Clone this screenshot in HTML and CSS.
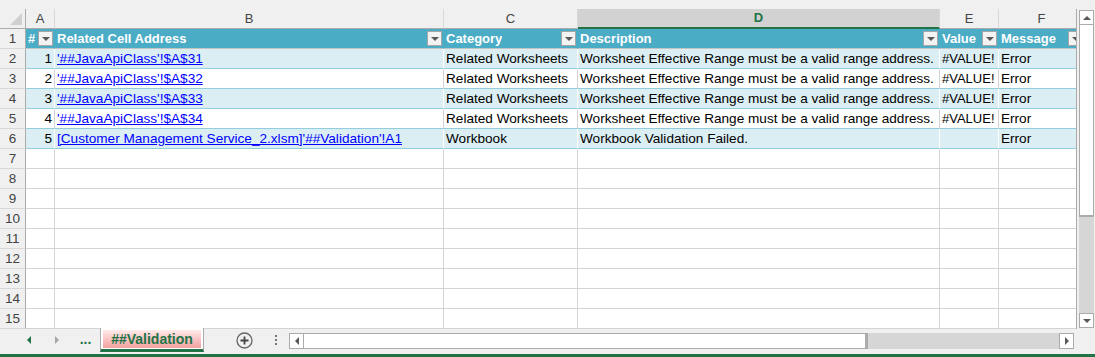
FILE: index.html
```html
<!DOCTYPE html>
<html lang="en">
  <head>
    <meta charset="UTF-8" />
    <title>##Validation</title>
    <link rel="stylesheet" href="styles.css">
  </head>
  <body>
    <div class="top"></div>

    <div class="sheet">
      <div class="grid">
        <table>
          <colgroup>
            <col style="width:26px"><col style="width:29px"><col style="width:389px"><col style="width:134px">
            <col style="width:362px"><col style="width:59px"><col style="width:86px">
          </colgroup>
          <tr class="colhdr">
            <td class="corner">
              <svg width="25" height="19" viewBox="0 0 25 19"><polygon points="22,4 22,16 10,16" fill="#d0d0d0" /></svg>
            </td>
            <td>A</td>
            <td>B</td>
            <td>C</td>
            <td class="sel">D</td>
            <td>E</td>
            <td>F</td>
          </tr>
          <tr class="th">
            <td class="rh">1</td>
            <td><div class="hc"><span>#</span><i class="fb"></i></div></td>
            <td><div class="hc"><span>Related Cell Address</span><i class="fb"></i></div></td>
            <td><div class="hc"><span>Category</span><i class="fb"></i></div></td>
            <td><div class="hc"><span>Description</span><i class="fb"></i></div></td>
            <td><div class="hc"><span>Value</span><i class="fb"></i></div></td>
            <td><div class="hc"><span>Message</span><i class="fb"></i></div></td>
          </tr>
          <tr class="band">
            <td class="rh">2</td>
            <td class="num">1</td>
            <td><a href="#">'##JavaApiClass'!$A$31</a></td>
            <td>Related Worksheets</td>
            <td>Worksheet Effective Range must be a valid range address.</td>
            <td class="val">#VALUE!</td>
            <td>Error</td>
          </tr>
          <tr class="plain">
            <td class="rh">3</td>
            <td class="num">2</td>
            <td><a href="#">'##JavaApiClass'!$A$32</a></td>
            <td>Related Worksheets</td>
            <td>Worksheet Effective Range must be a valid range address.</td>
            <td class="val">#VALUE!</td>
            <td>Error</td>
          </tr>
          <tr class="band">
            <td class="rh">4</td>
            <td class="num">3</td>
            <td><a href="#">'##JavaApiClass'!$A$33</a></td>
            <td>Related Worksheets</td>
            <td>Worksheet Effective Range must be a valid range address.</td>
            <td class="val">#VALUE!</td>
            <td>Error</td>
          </tr>
          <tr class="plain">
            <td class="rh">5</td>
            <td class="num">4</td>
            <td><a href="#">'##JavaApiClass'!$A$34</a></td>
            <td>Related Worksheets</td>
            <td>Worksheet Effective Range must be a valid range address.</td>
            <td class="val">#VALUE!</td>
            <td>Error</td>
          </tr>
          <tr class="band">
            <td class="rh">6</td>
            <td class="num">5</td>
            <td><a href="#">[Customer Management Service_2.xlsm]'##Validation'!A1</a></td>
            <td>Workbook</td>
            <td>Workbook Validation Failed.</td>
            <td></td>
            <td>Error</td>
          </tr>
          <tr><td class="rh">7</td><td></td><td></td><td></td><td></td><td></td><td></td></tr>
          <tr><td class="rh">8</td><td></td><td></td><td></td><td></td><td></td><td></td></tr>
          <tr><td class="rh">9</td><td></td><td></td><td></td><td></td><td></td><td></td></tr>
          <tr><td class="rh">10</td><td></td><td></td><td></td><td></td><td></td><td></td></tr>
          <tr><td class="rh">11</td><td></td><td></td><td></td><td></td><td></td><td></td></tr>
          <tr><td class="rh">12</td><td></td><td></td><td></td><td></td><td></td><td></td></tr>
          <tr><td class="rh">13</td><td></td><td></td><td></td><td></td><td></td><td></td></tr>
          <tr><td class="rh">14</td><td></td><td></td><td></td><td></td><td></td><td></td></tr>
          <tr><td class="rh">15</td><td></td><td></td><td></td><td></td><td></td><td></td></tr>
        </table>
      </div>

      <div class="vscroll">
        <div class="sb-btn"><i class="tri-up"></i></div>
        <div class="vthumb"></div>
        <div class="vtrack"></div>
        <div class="sb-btn"><i class="tri-down"></i></div>
      </div>
    </div>

    <div class="tabbar">
      <div class="nav"><i class="tri-left green"></i></div>
      <div class="nav"><i class="tri-right grey"></i></div>
      <div class="more-tabs">...</div>
      <div class="tab"><div class="tab-face">##Validation</div></div>
      <div class="add">
        <svg width="17" height="17" viewBox="0 0 17 17">
          <circle cx="8.5" cy="8.5" r="7.5" fill="none" stroke="#666" stroke-width="1.3" />
          <path d="M8.5 4.5v8M4.5 8.5h8" stroke="#444" stroke-width="1.8" />
        </svg>
      </div>
      <div class="kebab">
        <svg width="4" height="12" viewBox="0 0 4 12">
          <rect x="1" y="1" width="2" height="2" fill="#777" />
          <rect x="1" y="5" width="2" height="2" fill="#777" />
          <rect x="1" y="9" width="2" height="2" fill="#777" />
        </svg>
      </div>
      <div class="hscroll">
        <div class="sb-btn h"><i class="tri-left dark"></i></div>
        <div class="hthumb"></div>
        <div class="htrack"></div>
        <div class="sb-btn h"><i class="tri-right dark"></i></div>
      </div>
    </div>

    <div class="status"></div>
  </body>
</html>
```

FILE: styles.css
```css
body {
  margin: 0;
  background: #f0f0f0;
  font-family: "Liberation Sans", Arial, sans-serif;
  font-size: 13px;
  color: #000;
  overflow: hidden;
}
.top {
  height: 9px;
}
.sheet {
  display: flex;
  height: 320px;
}
.grid {
  width: 1076px;
  overflow: hidden;
  border-right: 1px solid #ababab;
  background: #fff;
}
table {
  border-collapse: separate;
  border-spacing: 0;
  table-layout: fixed;
  width: 1085px;
}
td {
  height: 20px;
  box-sizing: border-box;
  padding: 0 2px;
  line-height: 19px;
  font-size: 13.6px;
  border-right: 1px solid #d4d4d4;
  border-bottom: 1px solid #d4d4d4;
  white-space: nowrap;
  overflow: hidden;
}
td.val {
  font-size: 13px;
  padding: 0 1px 0 2px;
}
.colhdr td {
  background: #f0f0f0;
  color: #444;
  font-size: 13px;
  text-align: center;
  border-right-color: #d8d8d8;
  border-bottom-color: #ababab;
}
.colhdr td.corner {
  padding: 0;
  border-right-color: #ababab;
}
.corner svg {
  display: block;
}
.colhdr td.sel {
  background: #d2d2d2;
  color: #217346;
  font-weight: bold;
  border-bottom: 2px solid #217346;
  line-height: 18px;
}
td.rh {
  background: #f0f0f0;
  color: #444;
  font-size: 13.5px;
  text-align: center;
  border-right-color: #ababab;
  border-bottom-color: #d8d8d8;
  padding: 0;
}
.th td:not(.rh) {
  background: #4bacc6;
  color: #fff;
  font-weight: bold;
  font-size: 13px;
  border-right-color: #4bacc6;
  border-bottom-color: #c4c4c4;
  padding: 0 1px 0 2px;
}
.hc {
  display: flex;
  align-items: center;
  height: 19px;
}
.hc span {
  overflow: hidden;
}
.fb {
  position: relative;
  flex: none;
  margin-left: auto;
  width: 15px;
  height: 15px;
  box-sizing: border-box;
  border: 1px solid #a6a6a6;
  background: #f3f3f3;
}
.fb::after {
  content: "";
  position: absolute;
  left: 3px;
  top: 5px;
  border-left: 4px solid transparent;
  border-right: 4px solid transparent;
  border-top: 4px solid #595959;
}
.band td:not(.rh) {
  background: #dbeef3;
  border-right-color: #fff;
  border-bottom-color: #92cddc;
}
.plain td:not(.rh) {
  background: #fff;
  border-bottom-color: #92cddc;
}
td.num {
  text-align: right;
}
a {
  color: #0000ff;
  text-decoration: underline;
}

/* scrollbars */
.vscroll {
  display: flex;
  flex-direction: column;
  width: 15px;
  margin: 1px 0 1px 2px;
  box-sizing: border-box;
}
.sb-btn {
  flex: none;
  width: 15px;
  height: 15px;
  box-sizing: border-box;
  border: 1px solid #ababab;
  background: #fff;
  display: flex;
  align-items: center;
  justify-content: center;
}
.vthumb {
  height: 190px;
  background: #fff;
  border: 1px solid #ababab;
  border-top: none;
  border-bottom-width: 2px;
}
.vtrack {
  flex: 1;
  background: #d6d6d6;
}
.tri-up {
  border-left: 4px solid transparent;
  border-right: 4px solid transparent;
  border-bottom: 4px solid #595959;
}
.tri-down {
  border-left: 4px solid transparent;
  border-right: 4px solid transparent;
  border-top: 4px solid #595959;
}
.tri-left {
  border-top: 4px solid transparent;
  border-bottom: 4px solid transparent;
  border-right: 4px solid #595959;
}
.tri-right {
  border-top: 4px solid transparent;
  border-bottom: 4px solid transparent;
  border-left: 4px solid #595959;
}
.tri-left.green {
  border-right-color: #217346;
}
.tri-right.grey {
  border-left-color: #a6a6a6;
}

/* sheet tabs */
.tabbar {
  display: flex;
  height: 25px;
  padding-left: 15px;
}
.nav {
  width: 28px;
  display: flex;
  align-items: center;
  justify-content: center;
  padding-bottom: 3px;
  box-sizing: border-box;
}
.more-tabs {
  width: 29px;
  text-align: center;
  color: #217346;
  font-weight: bold;
  font-size: 14px;
  line-height: 20px;
}
.tab {
  width: 104px;
  height: 24px;
  margin-top: -1px;
  box-sizing: border-box;
  border-left: 1px solid #ababab;
  border-right: 1px solid #ababab;
  border-bottom: 3px solid #217346;
  background: #fff;
  padding: 2px 2px 1px;
  display: flex;
}
.tab-face {
  flex: 1;
  background: linear-gradient(#ffeaea, #f3a0a0);
  color: #217346;
  font-weight: bold;
  font-size: 14px;
  text-align: center;
  line-height: 18px;
}
.add {
  margin-left: 32px;
  width: 17px;
  display: flex;
  align-items: center;
  padding-bottom: 3px;
}
.kebab {
  margin-left: 21px;
  width: 4px;
  display: flex;
  align-items: center;
  padding-bottom: 3px;
}
.hscroll {
  display: flex;
  margin: 4px 0 0 11px;
  width: 785px;
  height: 16px;
}
.sb-btn.h {
  height: 16px;
}
.hthumb {
  width: 564px;
  background: #fff;
  box-sizing: border-box;
  border: 1px solid #ababab;
  border-left: none;
  border-right-width: 3px;
}
.htrack {
  flex: 1;
  background: #d6d6d6;
}
.status {
  height: 3px;
  background: #217346;
}
```
